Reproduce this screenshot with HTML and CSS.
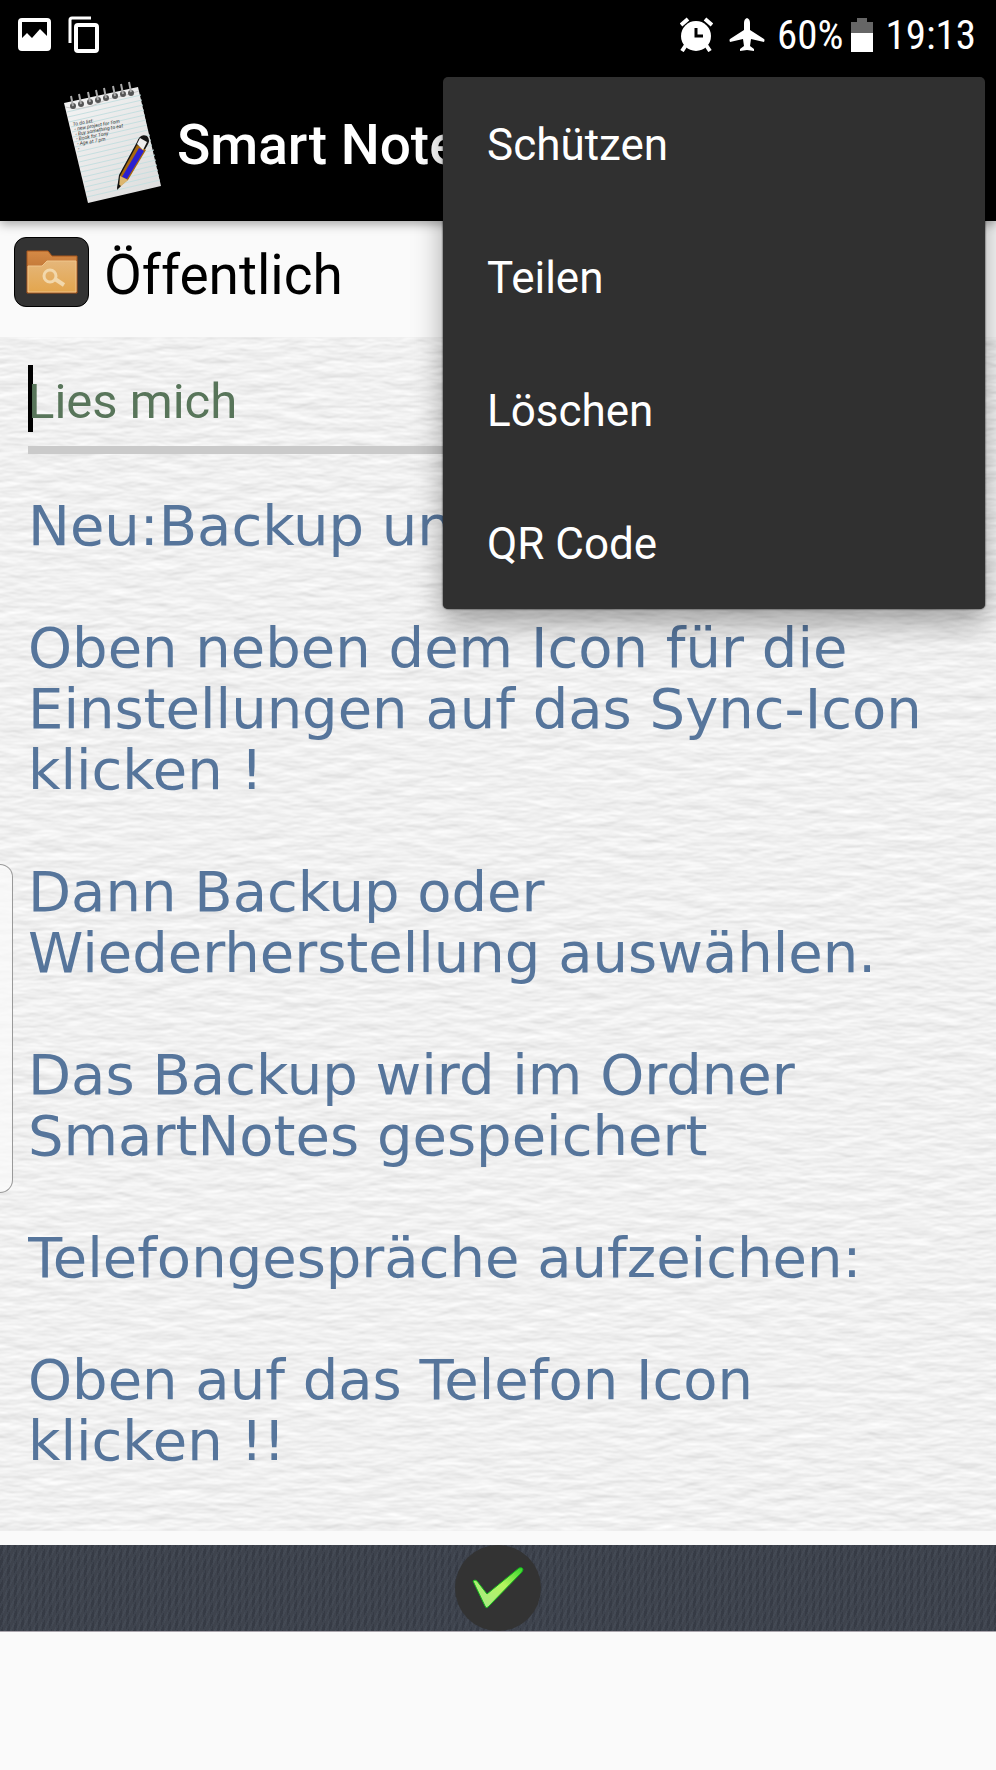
FILE: index.html
```html
<!DOCTYPE html>
<html lang="de">
<head>
<meta charset="utf-8">
<meta name="viewport" content="width=device-width, initial-scale=1">
<title>Smart Notes</title>
<link rel="stylesheet" href="styles.css">
</head>
<body>
<div class="statusbar">
  <div class="status-group">
    <svg width="33" height="33" viewBox="0 0 33 33" aria-hidden="true">
      <rect x="2" y="2" width="29" height="29" rx="2" fill="none" stroke="#fff" stroke-width="4"/>
      <path d="M3 21l6-6 5 5 8-9 8 8v11H3z" fill="#fff"/>
    </svg>
    <svg class="copy-icon" width="32" height="37" viewBox="0 0 32 37" aria-hidden="true">
      <path d="M2 27V4q0-2 2-2h19" fill="none" stroke="#fff" stroke-width="3"/>
      <rect x="8" y="9" width="21" height="26" rx="2" fill="none" stroke="#fff" stroke-width="4"/>
    </svg>
  </div>
  <div class="status-group status-right">
    <svg width="33" height="35" viewBox="0 0 33 35" aria-hidden="true">
      <circle cx="16" cy="19" r="15" fill="#fff"/>
      <path d="M1 8l7-6M32 8l-7-6" stroke="#fff" stroke-width="4" fill="none"/>
      <path d="M6 28l-4 6M26 28l4 6" stroke="#fff" stroke-width="4" fill="none"/>
      <path d="M16 11v8h7" stroke="#000" stroke-width="3" fill="none"/>
    </svg>
    <svg class="plane-icon" width="36" height="34" viewBox="0 0 36 34" aria-hidden="true">
      <path d="M18 0q3 1 3 5v7l14 9q1 1 0 3l-13-3-1 7 4 3v2l-7-1-7 1v-2l4-3-1-7-13 3q-1-2 0-3l14-9V5q0-4 3-5z" fill="#fff"/>
    </svg>
    <span class="status-text">60%</span>
    <svg class="battery-icon" width="22" height="34" viewBox="0 0 22 34" aria-hidden="true">
      <path d="M6 0h10v4h6v12H0V4h6z" fill="#666"/>
      <path d="M0 15h22v19H0z" fill="#fff"/>
    </svg>
    <span class="status-text">19:13</span>
  </div>
</div>

<header class="appbar">
  <svg class="logo" width="105" height="140" viewBox="60 75 105 140" aria-hidden="true">
    <defs>
      <linearGradient id="sheet" x1="0" y1="0" x2="1" y2="1">
        <stop offset="0" stop-color="#f5f5f5"/><stop offset="1" stop-color="#dcdcdc"/>
      </linearGradient>
    </defs>
    <path d="M64 103L138 87 161 186 88 203z" fill="url(#sheet)"/>
    <path d="M67 112l74-17M68 117l74-17M69 122l74-17M71 127l73-17M72 132l73-17M73 137l73-17M74 142l73-17M75 147l73-17M77 152l73-17M78 157l73-17M79 162l73-17M80 167l74-17M81 172l74-17M83 177l73-17M84 182l73-17M85 187l73-17M86 192l73-17M87 197l73-17" stroke="#c6dfe0" stroke-width="1" fill="none"/>
    <path d="M65 107l12 2 15-3 16-7 15-3 16-5" stroke="#c9c9c9" fill="none"/>
    <g fill="#555">
      <circle cx="73" cy="106" r="3"/><circle cx="81" cy="104" r="3"/><circle cx="90" cy="102" r="3"/><circle cx="98" cy="100" r="3"/><circle cx="106" cy="98" r="3"/><circle cx="115" cy="96" r="3"/><circle cx="123" cy="94" r="3"/><circle cx="131" cy="93" r="3"/>
    </g>
    <path d="M73 106l-2-10M81 104l-2-10M90 102l-2-10M98 100l-2-10M106 98l-2-10M115 96l-2-10M123 94l-2-10M131 92l-2-10" stroke="#aaa" stroke-width="2" fill="none"/>
    <g class="logo-note" transform="translate(73 126) rotate(-10)">
      <text x="0" y="0">To do list:</text>
      <text x="1" y="5">- new project for Tom</text>
      <text x="1" y="10">- Buy something to eat</text>
      <text x="1" y="15">- Book for Tony</text>
      <text x="1" y="20">- Age at 7 pm</text>
      <text x="1" y="25">-</text>
    </g>
    <path d="M117 189l2-14 18-33q3-9 10-6 4 4 0 10l-19 33z" fill="#151515"/>
    <path d="M120 176l17-31 9 5-18 30-8 6z" fill="#a8690d"/>
    <path d="M122 177l17-29 5 3-17 28z" fill="#2a1fd0"/>
    <path d="M137 144l3-6 7 4-4 8z" fill="#eee"/>
    <path d="M120 176l8 4-9 8z" fill="#dcb670"/>
    <path d="M118 184l3 2-4 4z" fill="#111"/>
  </svg>
  <h1 class="title">Smart Notes</h1>
</header>

<main>
  <section class="category">
    <button class="category-button" type="button" aria-label="Kategorie wählen">
      <svg width="52" height="46" viewBox="0 0 52 46" aria-hidden="true">
        <defs>
          <linearGradient id="back" x1="0" y1="0" x2="0" y2="1"><stop offset="0" stop-color="#d58a46"/><stop offset="1" stop-color="#a95e22"/></linearGradient>
          <linearGradient id="front" x1="0" y1="0" x2="0" y2="1"><stop offset="0" stop-color="#e5b67a"/><stop offset="1" stop-color="#e3a64e"/></linearGradient>
        </defs>
        <path d="M1 44V2h21l4 5h25v37z" fill="url(#back)" stroke="#a8561c" stroke-width="1"/>
        <path d="M2 43V17h14l5-5h29v31z" fill="url(#front)" stroke="#efc58c" stroke-width="1"/>
        <circle cx="24" cy="27" r="6" fill="none" stroke="#f2d8ac" stroke-width="3"/>
        <path d="M29 30l9 6" stroke="#f2d8ac" stroke-width="4"/>
      </svg>
    </button>
    <span class="category-name">Öffentlich</span>
  </section>

  <section class="paper">
    <svg class="texture" aria-hidden="true">
      <filter id="grain" x="0" y="0" width="100%" height="100%" color-interpolation-filters="sRGB">
        <feTurbulence type="fractalNoise" baseFrequency="0.03 0.1" numOctaves="3" seed="8"/>
        <feColorMatrix values="0 0 0 0 0  0 0 0 0 0  0 0 0 0 0  1 0 0 0 0"/>
        <feDiffuseLighting surfaceScale="0.5" diffuseConstant="1.1" lighting-color="#f1f1f1">
          <feDistantLight azimuth="270" elevation="65"/>
        </feDiffuseLighting>
      </filter>
      <rect width="100%" height="100%" filter="url(#grain)"/>
    </svg>
    <div class="heading-field">
      <input class="heading-input" type="text" value="Lies mich" aria-label="Titel">
      <span class="caret"></span>
    </div>
    <textarea class="note" rows="16" spellcheck="false" aria-label="Notiz">Neu:Backup und

Oben neben dem Icon für die
Einstellungen auf das Sync-Icon
klicken !

Dann Backup oder
Wiederherstellung auswählen.

Das Backup wird im Ordner
SmartNotes gespeichert

Telefongespräche aufzeichen:

Oben auf das Telefon Icon
klicken !!</textarea>
  </section>
</main>

<footer class="toolbar">
  <button class="confirm" type="button" aria-label="Speichern">
    <svg width="54" height="44" viewBox="0 0 54 44" aria-hidden="true">
      <defs>
        <linearGradient id="tick" x1="0" y1="1" x2="1" y2="0"><stop offset="0" stop-color="#a6e88c"/><stop offset=".6" stop-color="#b4f55e"/><stop offset="1" stop-color="#35d52c"/></linearGradient>
      </defs>
      <path d="M2 15q2-2 4 0l10 13L48 2q3-1 4 1 0 2-2 4L17 41q-2 2-3-1z" fill="url(#tick)" stroke="#12b51c" stroke-width="1"/>
    </svg>
  </button>
</footer>

<div class="menu" role="menu">
  <button class="menu-item" type="button" role="menuitem">Schützen</button>
  <button class="menu-item" type="button" role="menuitem">Teilen</button>
  <button class="menu-item" type="button" role="menuitem">Löschen</button>
  <button class="menu-item" type="button" role="menuitem">QR Code</button>
</div>
<div class="edge-handle"></div>
</body>
</html>
```
FILE: styles.css
```css
* {
  box-sizing: border-box;
}

body {
  margin: 0;
  position: relative;
  min-height: 100vh;
  background: #fafafa;
  font-family: Roboto, "Liberation Sans", sans-serif;
  color: #000;
}

svg {
  display: block;
  flex: none;
}

button,
input,
textarea {
  font: inherit;
  border: 0;
  border-radius: 0;
  outline: 0;
  margin: 0;
  padding: 0;
}

.statusbar {
  display: flex;
  justify-content: space-between;
  align-items: center;
  height: 69px;
  padding: 0 20px 0 18px;
  background: #000;
  color: #fff;
}

.status-group {
  display: flex;
  align-items: center;
  gap: 17px;
}

.status-right {
  gap: 8px;
}

.plane-icon {
  margin: 0 4px 0 8px;
}

.battery-icon {
  margin-right: 4px;
}

.status-text {
  font-family: "Roboto Condensed", Roboto, sans-serif;
  font-size: 41px;
  line-height: 50px;
}

.appbar {
  display: flex;
  align-items: center;
  gap: 12px;
  height: 152px;
  padding-left: 60px;
  background: #000;
  color: #fff;
  position: relative;
  box-shadow: 0 3px 10px rgba(0, 0, 0, 0.35);
}

.logo-note {
  font-size: 5px;
  font-style: italic;
  fill: #333;
}

.title {
  margin: 0;
  font-size: 55px;
  font-weight: 500;
  line-height: 66px;
}

.category {
  display: flex;
  align-items: flex-start;
  gap: 15px;
  padding: 16px 14px 24px;
}

.category-button {
  display: flex;
  align-items: center;
  justify-content: center;
  width: 75px;
  height: 70px;
  border: 1px solid #000;
  border-radius: 12px;
  background: #333;
}

.category-name {
  font-size: 55px;
  line-height: 76px;
}

.paper {
  position: relative;
  padding: 28px 28px 60px;
  background: #f0f0f0;
}

.texture {
  position: absolute;
  inset: 0;
  width: 100%;
  height: 100%;
}

.heading-field {
  position: relative;
  z-index: 0;
}

.heading-input {
  display: block;
  width: 100%;
  height: 89px;
  padding-bottom: 8px;
  border-bottom: 8px solid #cacaca;
  background: transparent;
  color: #58755a;
  font-size: 49px;
}

.caret {
  position: absolute;
  left: 0;
  top: 0;
  width: 5px;
  height: 67px;
  background: #000;
  z-index: -1;
}

.note {
  position: relative;
  display: block;
  width: 100%;
  margin-top: 41px;
  background: transparent;
  color: #56759b;
  font-family: "DejaVu Sans", sans-serif;
  font-size: 56px;
  line-height: 61px;
  resize: none;
  overflow: hidden;
}

.toolbar {
  display: flex;
  justify-content: center;
  margin-top: 14px;
  border-bottom: 1px solid #aaa5ad;
  background:
    repeating-linear-gradient(115deg, rgba(80, 88, 100, 0.3) 0 2px, transparent 2px 5px),
    repeating-linear-gradient(90deg, rgba(24, 28, 38, 0.2) 0 3px, transparent 3px 7px),
    #3e434d;
}

.confirm {
  display: flex;
  align-items: center;
  justify-content: center;
  width: 86px;
  height: 86px;
  border-radius: 50%;
  background: #333;
}

.menu {
  position: absolute;
  top: 77px;
  right: 11px;
  width: 542px;
  border-radius: 5px;
  background: #303030;
  box-shadow: 0 14px 30px rgba(0, 0, 0, 0.35), 0 0 2px #000;
}

.menu-item {
  display: block;
  width: 100%;
  height: 133px;
  padding: 2px 44px 0;
  background: transparent;
  color: #fff;
  font-size: 44px;
  text-align: left;
}

.edge-handle {
  position: absolute;
  left: 0;
  top: 864px;
  width: 13px;
  height: 329px;
  border: 1px solid #999;
  border-left: 0;
  border-radius: 0 14px 14px 0;
  background: rgba(250, 250, 250, 0.75);
}
```
